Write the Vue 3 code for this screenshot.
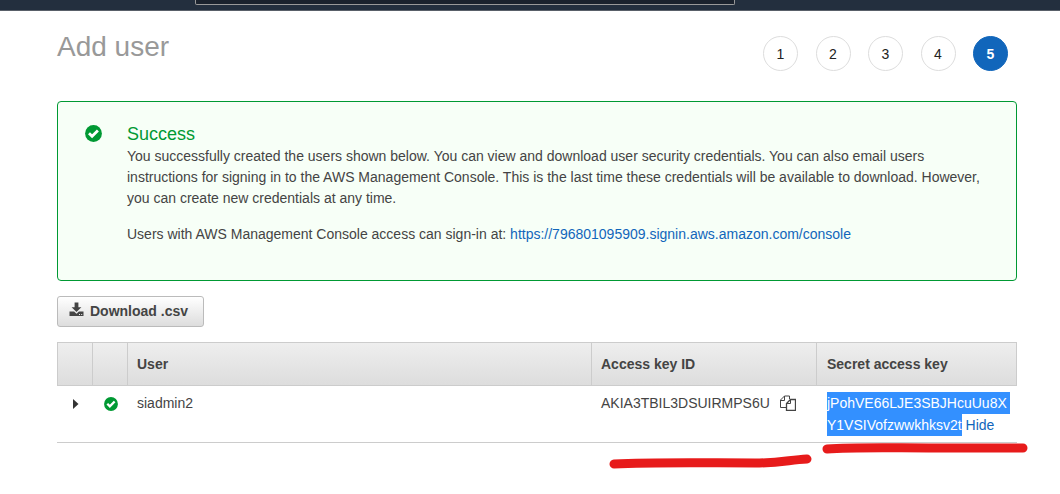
<script setup>
import { ref } from 'vue'

const steps = [1, 2, 3, 4, 5]
const current = 5
const search = ref('')
const user = {
  name: 'siadmin2',
  keyId: 'AKIA3TBIL3DSUIRMPS6U',
  secret: ['jPohVE66LJE3SBJHcuUu8X', 'Y1VSIVofzwwkhksv2t'],
}
</script>

<template>
  <header class="topbar">
    <input v-model="search" class="search" type="text" aria-label="Search" />
  </header>
  <main class="page">
    <div class="heading">
      <h1>Add user</h1>
      <ol class="steps">
        <li v-for="s in steps" :key="s" :class="{ active: s === current }">{{ s }}</li>
      </ol>
    </div>

    <section class="alert">
      <svg class="alert-icon" viewBox="0 0 17 17" aria-hidden="true">
        <circle cx="8.5" cy="8.5" r="8.4" fill="#093" />
        <path d="M4 8.2l3.1 3.1 5.800-5.800" fill="none" stroke="#fff" stroke-width="2.8" />
      </svg>
      <div class="alert-body">
        <h2>Success</h2>
        <p>
          You successfully created the users shown below. You can view and download user security
          credentials. You can also email users instructions for signing in to the AWS Management
          Console. This is the last time these credentials will be available to download. However,
          you can create new credentials at any time.
        </p>
        <p>
          Users with AWS Management Console access can sign-in at:
          <a href="#">https://796801095909.signin.aws.amazon.com/console</a>
        </p>
      </div>
    </section>

    <button class="download" type="button">
      <svg viewBox="0 0 15 15" aria-hidden="true">
        <path d="M5.600 0.500h3.800v4.700h3L7.500 10 2.600 5.200h3z" fill="#444" />
        <path d="M0.500 9.500h4.600l2.400 2.200 2.400-2.200h4.600v4.500h-14z" fill="#444" />
        <path d="M10 12h1v1h-1zM12.200 12h1v1h-1z" fill="#eee" />
      </svg>
      Download .csv
    </button>

    <table>
      <colgroup>
        <col class="c-icon" />
        <col class="c-icon" />
        <col />
        <col class="c-id" />
        <col class="c-secret" />
      </colgroup>
      <thead>
        <tr>
          <th></th>
          <th></th>
          <th>User</th>
          <th>Access key ID</th>
          <th>Secret access key</th>
        </tr>
      </thead>
      <tbody>
        <tr>
          <td class="icon-cell">
            <button class="expand" type="button" aria-label="Expand">
              <svg viewBox="0 0 6 10" aria-hidden="true"><path d="M0 0l5.500 5L0 10z" fill="#333" /></svg>
            </button>
          </td>
          <td class="icon-cell">
            <svg class="ok" viewBox="0 0 17 17" aria-hidden="true">
              <circle cx="8.5" cy="8.5" r="8.4" fill="#093" />
              <path d="M4 8.200l3.100 3.100 5.800-5.800" fill="none" stroke="#fff" stroke-width="2.800" />
            </svg>
          </td>
          <td>{{ user.name }}</td>
          <td>
            <div class="key">
              {{ user.keyId }}
              <button class="copy" type="button" aria-label="Copy">
                <svg viewBox="0 0 16 16" fill="none" stroke="#444" aria-hidden="true">
                  <path d="M6.500 12.500h-6v-7.500l4-4h5v3" />
                  <path d="M0.500 5.500h4v-4.500" />
                  <path d="M10.500 4.500h5v11h-9v-7z" fill="#fff" stroke-width="1.300" />
                  <path d="M6.500 8.500h4v-4" />
                </svg>
              </button>
            </div>
          </td>
          <td class="secret">
            <mark class="wrapped">{{ user.secret[0] }}</mark><br />
            <mark>{{ user.secret[1] }}</mark> <a href="#">Hide</a>
          </td>
        </tr>
      </tbody>
    </table>
    <div class="ink">
      <svg width="430" height="36" viewBox="0 0 430 36" aria-hidden="true">
        <g fill="none" stroke="#e71b1b" stroke-width="9" stroke-linecap="round">
          <path d="M9 28C50 26 100 27 150 27C175 27 184 24 202 23" />
          <path d="M222 13C250 11 285 12 330 12H418" />
        </g>
      </svg>
    </div>
  </main>
</template>

<style>
body {
  margin: 0;
  background: #fff;
}
</style>

<style scoped>
.topbar {
  box-sizing: border-box;
  height: 11px;
  padding: 0 325px 0 195px;
  background: #232f3e;
  border-bottom: 1px solid #596069;
}
.search {
  display: block;
  box-sizing: border-box;
  width: 100%;
  height: 5px;
  padding: 0;
  border: 1px solid #999;
  border-top: 0;
  border-radius: 0 0 2px 2px;
  background: #1a222d;
  outline: 0;
}
.page {
  padding: 0 43px 0 57px;
  color: #444;
  font: 14px/21px "Liberation Sans", Arial, sans-serif;
}
.heading {
  display: flex;
  justify-content: space-between;
  align-items: flex-start;
  height: 65px;
  padding: 19px 9px 0 0;
  margin-bottom: 6px;
}
h1 {
  margin: 0;
  color: #999;
  font-size: 28px;
  font-weight: 400;
  line-height: 34px;
}
.steps {
  display: flex;
  justify-content: space-between;
  width: 245px;
  margin: 6px 0 0;
  padding: 0;
  list-style: none;
}
.steps li {
  box-sizing: border-box;
  width: 35px;
  height: 35px;
  border: 1px solid #ddd;
  border-radius: 50%;
  color: #222;
  line-height: 35px;
  text-align: center;
}
.steps .active {
  border-color: #1166bb;
  background: #1166bb;
  color: #fff;
  font-weight: 700;
}
.alert {
  display: flex;
  gap: 25px;
  padding: 20px 28px 35px 27px;
  border: 1px solid #093;
  border-radius: 4px;
  background: #f7fff7;
}
.alert-icon {
  flex: none;
  width: 17px;
  height: 17px;
  margin-top: 3px;
}
h2 {
  margin: 0;
  color: #093;
  font-size: 18px;
  font-weight: 400;
  line-height: 24px;
}
p {
  margin: 0;
}
p + p {
  margin-top: 15px;
}
a {
  color: #1166bb;
  text-decoration: none;
}
.download {
  display: flex;
  align-items: center;
  gap: 6px;
  height: 31px;
  margin: 15px 0;
  padding: 0 15px 0 11px;
  border: 1px solid #bbb;
  border-radius: 3px;
  background: linear-gradient(#fff, #ddd);
  color: #444;
  font: bold 14px/21px "Liberation Sans", Arial, sans-serif;
}
.download svg {
  width: 15px;
  height: 15px;
  margin-bottom: 4px;
}
table {
  width: 100%;
  border-spacing: 0;
  table-layout: fixed;
}
.c-icon {
  width: 35px;
}
.c-id {
  width: 225px;
}
.c-secret {
  width: 201px;
}
th {
  height: 42px;
  padding: 0 0 0 9px;
  border: 1px solid #ccc;
  border-right: 0;
  background: linear-gradient(#eee, #ddd);
  text-align: left;
}
th:last-child {
  padding-left: 10px;
  border-right: 1px solid #ccc;
}
td {
  height: 44px;
  padding: 6px 0 6px 10px;
  border-bottom: 1px solid #ccc;
  line-height: 22px;
  vertical-align: top;
}
.icon-cell {
  padding-left: 12px;
}
.expand,
.copy {
  display: block;
  padding: 0;
  border: 0;
  background: none;
}
.expand svg {
  display: block;
  width: 6px;
  height: 10px;
  margin: 7px 0 0 4px;
}
.ok {
  display: block;
  width: 14px;
  height: 14px;
  margin-top: 5px;
}
.key {
  display: flex;
  align-items: center;
  gap: 10px;
}
.copy svg {
  display: block;
  width: 16px;
  height: 16px;
}
.secret {
  padding-left: 11px;
}
mark {
  padding: 3px 0;
  background: #3390ff;
  color: #fff;
}
.wrapped {
  padding-right: 3px;
}
.ink {
  position: relative;
  display: flex;
  justify-content: flex-end;
  margin: -7px -18px 0 0;
  pointer-events: none;
}
.ink svg {
  flex: none;
}
</style>
